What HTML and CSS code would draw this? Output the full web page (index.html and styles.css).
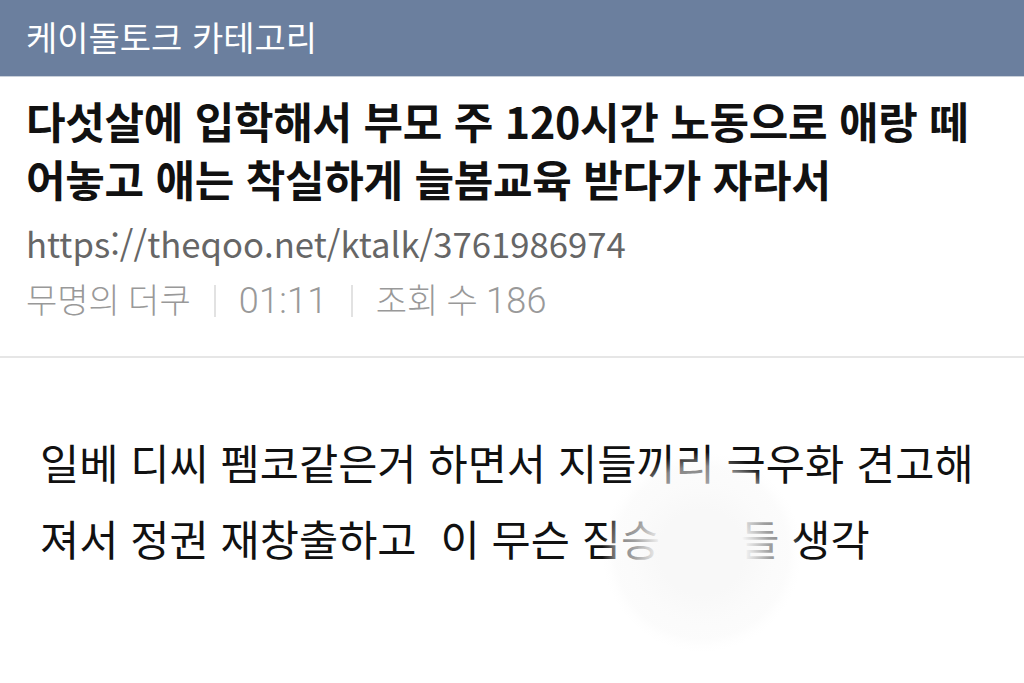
FILE: index.html
```html
<!DOCTYPE html>
<html lang="ko">
<head>
<meta charset="utf-8">
<link rel="stylesheet" href="styles.css">
</head>
<body>
<header class="topbar">케이돌토크 카테고리</header>
<section class="post-head">
  <h1 class="title">다섯살에 입학해서 부모 주 120시간 노동으로 애랑 떼어놓고 애는 착실하게 늘봄교육 받다가 자라서</h1>
  <div class="url">https://theqoo.net/ktalk/3761986974</div>
  <div class="meta"><span>무명의 더쿠</span><span class="sep"></span><span class="num">01:11</span><span class="sep"></span><span>조회 수 <span class="num">186</span></span></div>
</section>
<section class="body">
  <p class="line">일베 디씨 펨코같은거 하면서 지들끼리 극우화 견고해</p>
  <p class="line">져서 정권 재창출하고&nbsp; 이 무슨 짐승<span class="gap"></span>들 생각</p>
  <div class="blur"></div>
</section>
</body>
</html>
```
FILE: styles.css
```css
html, body { margin: 0; padding: 0; background: #fff; }
body {
  width: 1024px;
  height: 683px;
  overflow: hidden;
  font-family: "Noto Sans CJK KR", "Noto Sans", sans-serif;
}
.topbar {
  height: 77px;
  box-sizing: border-box;
  background: #6b7f9e;
  color: #fff;
  font-size: 34px;
  line-height: 74px;
  padding-left: 26px;
  border-bottom: 1px solid #c9d0da;
}
.post-head {
  padding: 14px 26px 0 26px;
  height: 281px;
  box-sizing: border-box;
  border-bottom: 2px solid #e6e6e6;
}
.title {
  margin: 0;
  font-size: 43px;
  font-weight: 700;
  line-height: 58px;
  color: #111;
  letter-spacing: -0.3px;
}
.url {
  margin-top: 13px;
  font-size: 34.7px;
  line-height: 46px;
  color: #666;
  font-weight: 400;
}
.meta {
  margin-top: 12px;
  font-family: "Roboto", "Noto Sans CJK KR", sans-serif;
  font-size: 34px;
  line-height: 46px;
  color: #999;
  font-weight: 300;
  display: flex;
  align-items: center;
}
.num {
  font-size: 36px;
  letter-spacing: 0.3px;
}
.sep {
  display: inline-block;
  width: 2px;
  height: 32px;
  background: #e2e2e2;
  margin: 0 23px;
}
.body {
  position: relative;
  padding: 66px 40px 0 40px;
}
.line {
  margin: 0;
  font-size: 42.6px;
  line-height: 76px;
  color: #111;
}
.gap {
  display: inline-block;
  width: 80px;
}
.blur {
  position: absolute;
  left: 602px;
  top: 94px;
  width: 200px;
  height: 200px;
  border-radius: 50%;
  background: radial-gradient(circle 100px at center,
    rgba(248,248,248,1) 0px,
    rgba(248,248,248,1) 42px,
    rgba(248,248,248,0.8) 56px,
    rgba(248,248,248,0.62) 68px,
    rgba(248,248,248,0.5) 86px,
    rgba(250,250,250,0.2) 94px,
    rgba(255,255,255,0) 100px);
}
```
